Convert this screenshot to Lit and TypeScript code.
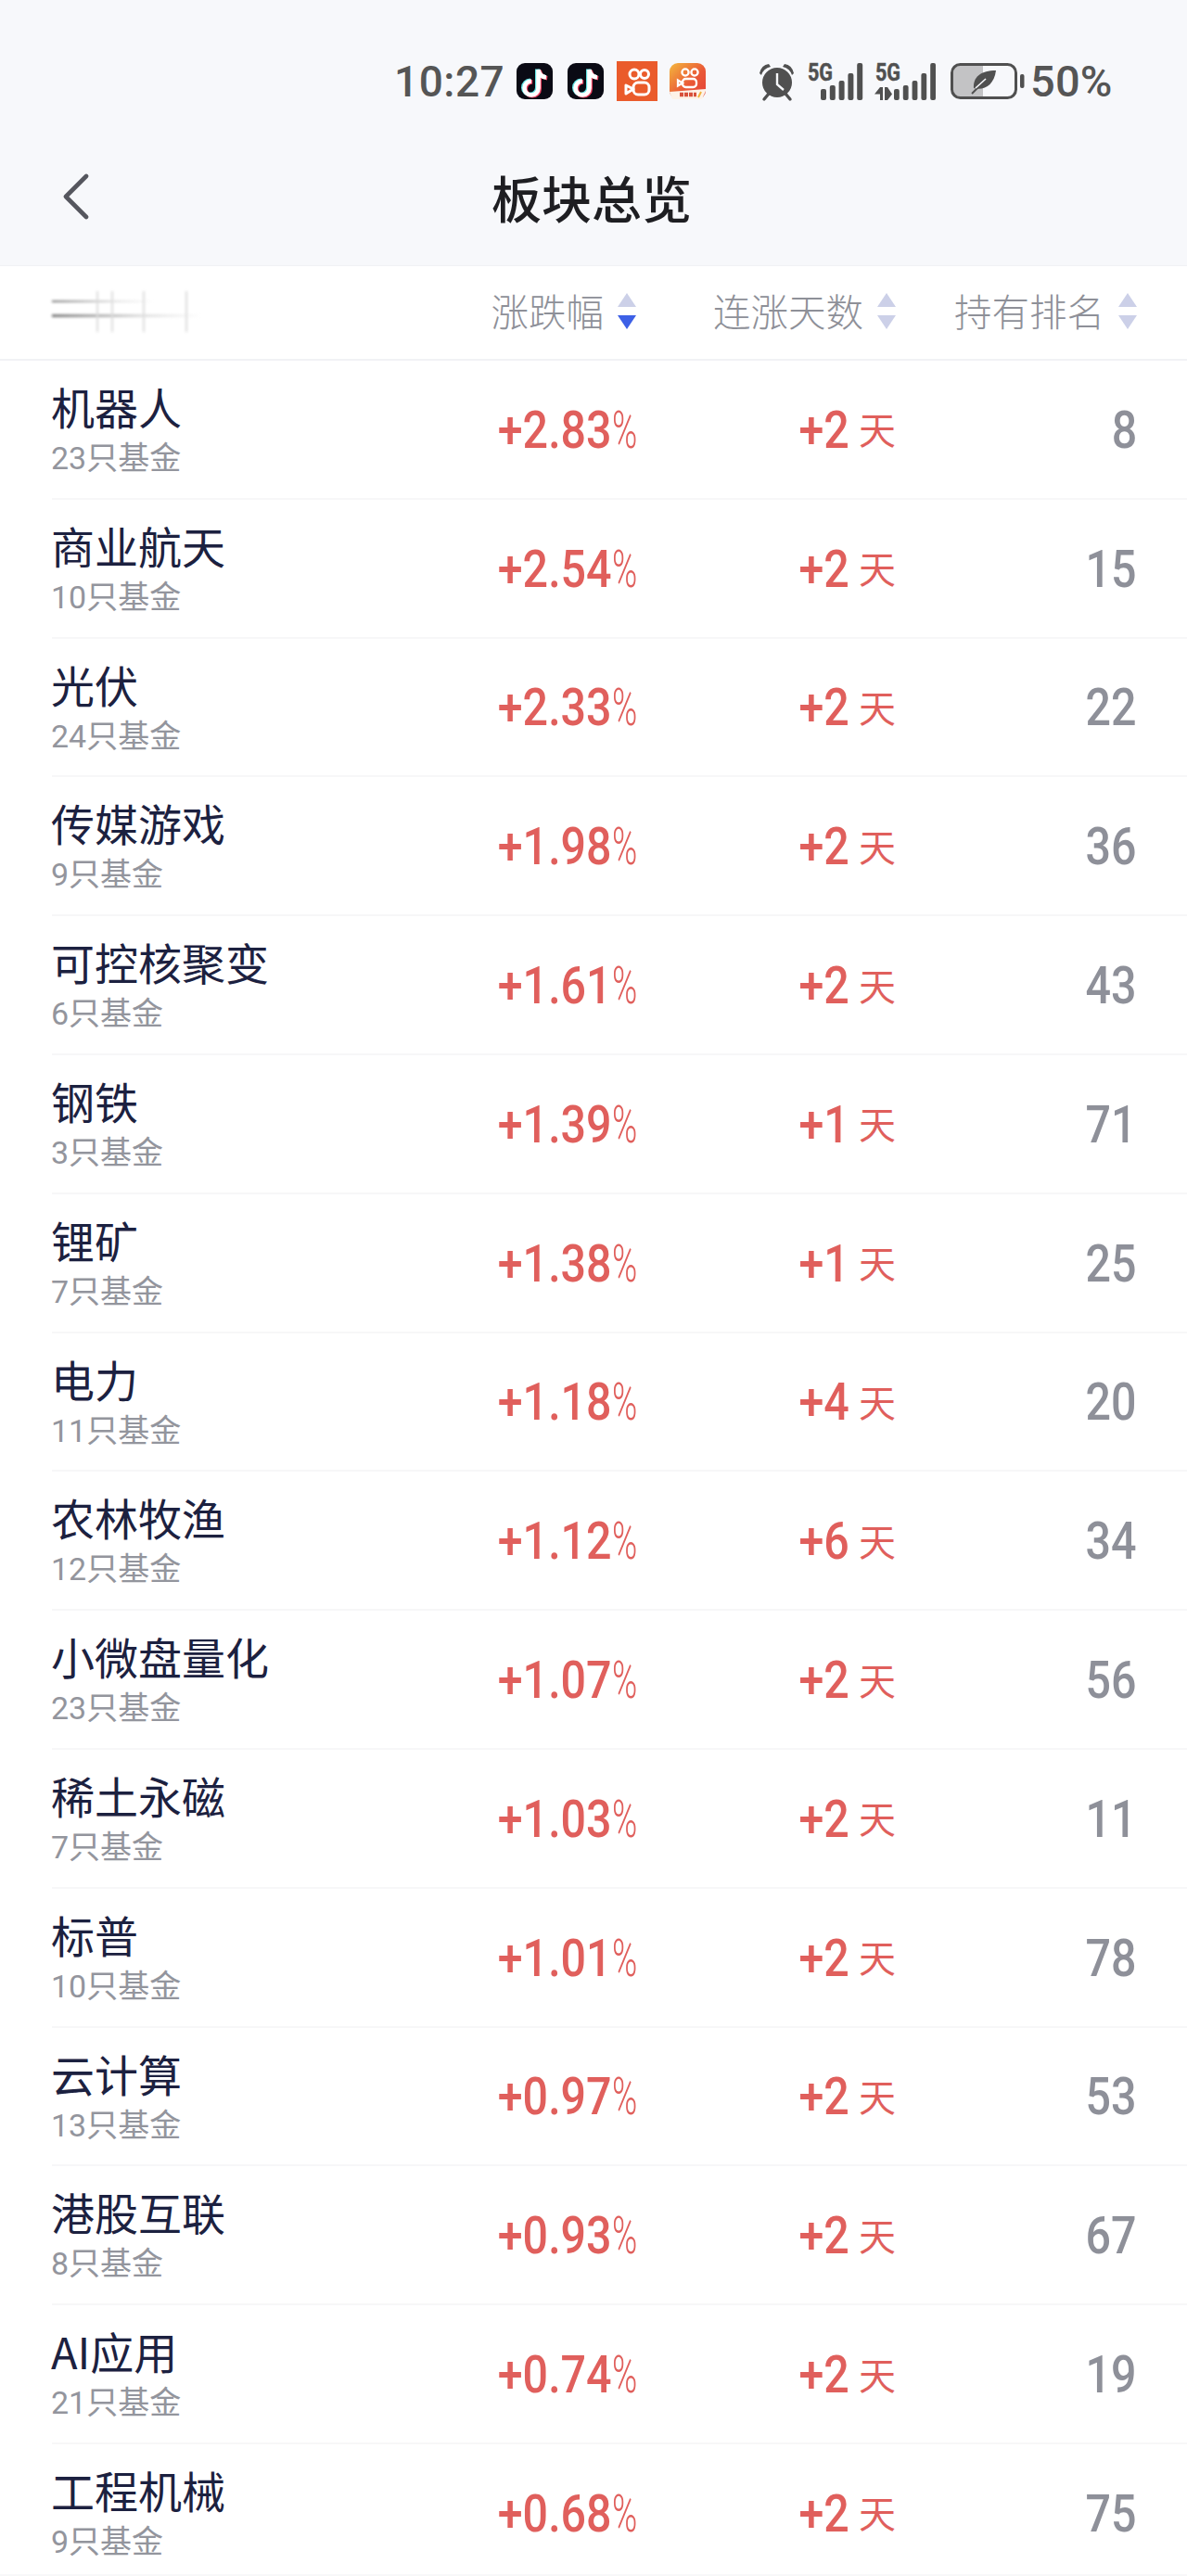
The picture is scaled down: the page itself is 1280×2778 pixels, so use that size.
import { LitElement, html, css, svg } from "lit";
import { customElement } from "lit/decorators.js";

const rows: [string, number, string, number, number][] = [
  ["机器人", 23, "+2.83", 2, 8],
  ["商业航天", 10, "+2.54", 2, 15],
  ["光伏", 24, "+2.33", 2, 22],
  ["传媒游戏", 9, "+1.98", 2, 36],
  ["可控核聚变", 6, "+1.61", 2, 43],
  ["钢铁", 3, "+1.39", 1, 71],
  ["锂矿", 7, "+1.38", 1, 25],
  ["电力", 11, "+1.18", 4, 20],
  ["农林牧渔", 12, "+1.12", 6, 34],
  ["小微盘量化", 23, "+1.07", 2, 56],
  ["稀土永磁", 7, "+1.03", 2, 11],
  ["标普", 10, "+1.01", 2, 78],
  ["云计算", 13, "+0.97", 2, 53],
  ["港股互联", 8, "+0.93", 2, 67],
  ["AI应用", 21, "+0.74", 2, 19],
  ["工程机械", 9, "+0.68", 2, 75],
];

const note = "M23.5 7v20a7.5 7.5 0 1 1-7.5-7.5M23.5 7c.6 5 3.8 8 8.5 8.5";

const tk = (cls: string) => html`<svg class="ic ${cls}" width="39" height="39" viewBox="0 0 39 39">
  <rect width="39" height="39" rx="9" fill="#0a0a14"/>
  <g fill="none" stroke-width="4.6">
    <path d=${note} stroke="#62e3e4" transform="translate(-1.2 -.6)"/>
    <path d=${note} stroke="#ee4060" transform="translate(1.2 .8)"/>
    <path d=${note} stroke="#fff"/>
  </g>
</svg>`;

const bars = (x0: number, hs: number[], w: number) =>
  hs.map((h, i) => svg`<rect x=${x0 + i * 9.8} y=${40 - h} width=${w} height=${h} rx="2" fill="#505050"/>`);

@customElement("app-root")
export class AppRoot extends LitElement {
  static styles = css`
    :host {
      display: block;
      position: relative;
      width: 1280px;
      height: 2778px;
      overflow: hidden;
      background: #fff;
      font-family: "Noto Sans CJK SC", "Noto Sans", sans-serif;
    }
    :host::after { content: ""; position: absolute; left: 0; right: 0; bottom: 0; height: 2px; background: #f8f8f9; }
    .top { background: #f7f8fb; height: 287px; display: flex; flex-direction: column; border-bottom: 1px solid #f0f1f4; box-sizing: border-box; }
    .status { height: 128px; flex: none; display: flex; align-items: center; padding: 47px 0 0 425px; box-sizing: border-box; color: #555; }
    .time { font: 500 46px/1 Roboto, sans-serif; letter-spacing: .5px; width: 132px; flex: none; }
    .ic { display: block; flex: none; overflow: visible; }
    .m16 { margin-left: 16px; }
    .m14 { margin-left: 14px; }
    .m13 { margin-left: 13px; }
    .m57 { margin-left: 57px; }
    .m12 { margin-left: 12px; }
    .lbl { font: 700 26px Roboto, sans-serif; fill: #505050; stroke: #505050; stroke-width: .5px; }
    .pct { font: 500 47px/1 Roboto, sans-serif; margin-left: 6px; letter-spacing: .2px; white-space: nowrap; }
    .nav { flex: 1; position: relative; display: flex; align-items: center; justify-content: center; padding: 12px 4px 0 0; box-sizing: border-box; }
    .title { font-size: 54px; font-weight: 500; color: #1e1e22; line-height: 1; }
    .back { position: absolute; left: 64px; top: 56px; }
    .head { height: 102px; display: flex; align-items: center; border-bottom: 2px solid #f1f2f5; box-sizing: border-box; padding-bottom: 3px; }
    .blur { width: 165px; height: 44px; margin-left: 56px; position: relative; filter: blur(1.5px); flex: none; }
    .blur i { position: absolute; display: block; }
    .blur .h { left: 0; height: 2px; background: linear-gradient(90deg, #777, #ddd 60%, transparent); }
    .blur .h1 { top: 10px; width: 110px; }
    .blur .h2 { top: 25px; width: 160px; height: 3px; }
    .blur .v { top: 0; width: 2px; height: 44px; background: #dcdcdc; }
    .blur .v1 { left: 48px; }
    .blur .v2 { left: 64px; }
    .blur .v3 { left: 98px; }
    .blur .v4 { left: 144px; }
    .hcols { margin-left: auto; display: flex; align-items: center; padding-right: 54px; }
    .hcol { display: flex; align-items: center; font-size: 40.5px; font-weight: 300; color: #8e9098; line-height: 1; gap: 15px; }
    .hcol + .hcol { margin-left: 83px; }
    .hcol + .hcol + .hcol { margin-left: 63px; }
    .sort { display: flex; flex-direction: column; gap: 9px; }
    .sort b { display: block; width: 0; height: 0; border-left: 10px solid transparent; border-right: 10px solid transparent; }
    .up { border-bottom: 15px solid #ccd0e8; }
    .down { border-top: 15px solid #ccd0e8; }
    .down.on { border-top-color: #3d60e6; }
    .row { height: 149.8px; margin-left: 56px; box-sizing: border-box; border-bottom: 2px solid #f7f7f8; display: grid; grid-template-columns: 1fr 200px 282px 260px; padding-right: 54px; align-items: center; }
    .name { align-self: start; padding-top: 21px; margin-left: -1px; }
    .n { font-size: 47px; line-height: 56px; color: #1c2140; }
    .s { font-size: 34px; line-height: 40px; color: #93959d; margin-top: 6px; }
    .s span { font-family: Roboto, sans-serif; }
    .cell { display: flex; justify-content: flex-end; align-items: center; color: #e05f5c; padding-top: 3px; }
    .num { display: block; font: 500 55px/1 Roboto, sans-serif; transform: scaleX(.88); transform-origin: right center; white-space: nowrap; }
    .p { display: block; width: 24px; font: 300 55px/1 Roboto, sans-serif; transform: scaleX(.67); transform-origin: left center; }
    .day { font-size: 40px; line-height: 1; font-weight: 400; margin: -4px 0 0 10px; }
    .rank { color: #8e9099; }
  `;

  render() {
    return html`
      <div class="top">
        <div class="status">
          <span class="time">10:27</span>
          ${tk("")}${tk("m16")}
          <svg class="ic m14" width="44" height="43" viewBox="0 0 44 43">
            <rect width="44" height="43" fill="#ea5b2b"/>
            <g fill="none" stroke="#fff" stroke-width="3">
              <circle cx="19" cy="14" r="5"/>
              <circle cx="30" cy="14" r="4.5"/>
              <rect x="18" y="23" width="17" height="13" rx="5"/>
              <path d="M18 30l-8-4v9z" stroke-linejoin="round"/>
            </g>
          </svg>
          <svg class="ic m13" width="39" height="39" viewBox="0 0 39 39">
            <defs><linearGradient id="kg" x1="0" y1="0" x2="1" y2="1"><stop offset="0" stop-color="#f4b83e"/><stop offset=".55" stop-color="#ea5a36"/><stop offset="1" stop-color="#e4403a"/></linearGradient></defs>
            <rect width="39" height="39" rx="9" fill="url(#kg)"/>
            <g fill="none" stroke="#fff" stroke-width="2.3">
              <circle cx="17" cy="10" r="3.6"/>
              <circle cx="27" cy="10" r="3.6"/>
              <rect x="14" y="17" width="15" height="9" rx="3.5"/>
              <path d="M14 21.5l-5-3v6z"/>
            </g>
            <path d="M0 31l39-3v2l-4 9H3z" fill="#fdf3e8"/>
            <path d="M11 34h18" stroke="#d8503a" stroke-width="4.5" stroke-dasharray="4 1"/>
            <path d="M31 37l3-6" stroke="#f2b23a" stroke-width="2"/>
          </svg>
          <svg class="ic m57" width="39" height="40" viewBox="0 0 39 40">
            <circle cx="20" cy="21" r="16" fill="#505050"/>
            <path d="M20 11v12l7 6" stroke="#f7f8fb" stroke-width="2.4" fill="none"/>
            <path d="M1 11q2-9 10-10l2 3Q5 6 3 13zM38 11q-2-9-10-10l-2 3q8 2 10 9z" fill="#505050"/>
            <path d="M11 33l-5 6M29 33l5 6" stroke="#505050" stroke-width="3.4" stroke-linecap="round"/>
          </svg>
          <svg class="ic m14" width="60" height="40" viewBox="0 0 60 40">
            <text class="lbl" x="0" y="18.5" textLength="27" lengthAdjust="spacingAndGlyphs">5G</text>
            ${bars(14, [12, 16, 21, 29, 40], 6)}
          </svg>
          <svg class="ic m12" width="66" height="40" viewBox="0 0 66 40">
            <text class="lbl" x="1" y="18.5" textLength="27" lengthAdjust="spacingAndGlyphs">5G</text>
            <path d="M0 33.500l6-7.500h3v14H6v-6.500z" fill="#505050"/>
            <path d="M11 26h3l5 7.500-5 6.500h-3z" fill="#505050"/>
            ${bars(21, [12, 16, 21, 29, 40], 5.8)}
          </svg>
          <svg class="ic m16" width="80" height="40" viewBox="0 0 80 40">
            <path d="M10 3h25v33H10a7 7 0 0 1-7-7V10a7 7 0 0 1 7-7z" fill="#c3c3c5"/>
            <rect x="1.500" y="1.500" width="69" height="36" rx="9" fill="none" stroke="#505050" stroke-width="3"/>
            <path d="M49 8C33 8 24 15 25 27c11 3 22-3 24-19z" fill="#505050"/>
            <path d="M23 33 37 19" stroke="#505050" stroke-width="2"/>
            <path d="M27 27 38 17" stroke="#f7f8fb" stroke-width="1.600"/>
            <rect x="75" y="12" width="4.500" height="15" rx="2" fill="#505050"/>
          </svg>
          <span class="pct">50%</span>
        </div>
        <div class="nav">
          <svg class="back" width="32" height="56" viewBox="0 0 32 56"><path d="M29 6 7 28l22 22" fill="none" stroke="#55565e" stroke-width="4.6" stroke-linecap="round" stroke-linejoin="round"/></svg>
          <div class="title">板块总览</div>
        </div>
      </div>
      <div class="head">
        <div class="blur">
          <i class="h h1"></i><i class="h h2"></i>
          <i class="v v1"></i><i class="v v2"></i><i class="v v3"></i><i class="v v4"></i>
        </div>
        <div class="hcols">
          ${["涨跌幅", "连涨天数", "持有排名"].map((t, i) => html`
            <div class="hcol">${t}<span class="sort"><b class="up"></b><b class="down ${i === 0 ? "on" : ""}"></b></span></div>`)}
        </div>
      </div>
      ${rows.map(([n, c, v, d, r]) => html`
        <div class="row">
          <div class="name"><div class="n">${n}</div><div class="s"><span>${c}</span>只基金</div></div>
          <div class="cell"><span class="num">${v}</span><span class="p">%</span></div>
          <div class="cell"><span class="num">+${d}</span><span class="day">天</span></div>
          <div class="cell rank"><span class="num">${r}</span></div>
        </div>`)}
    `;
  }
}
